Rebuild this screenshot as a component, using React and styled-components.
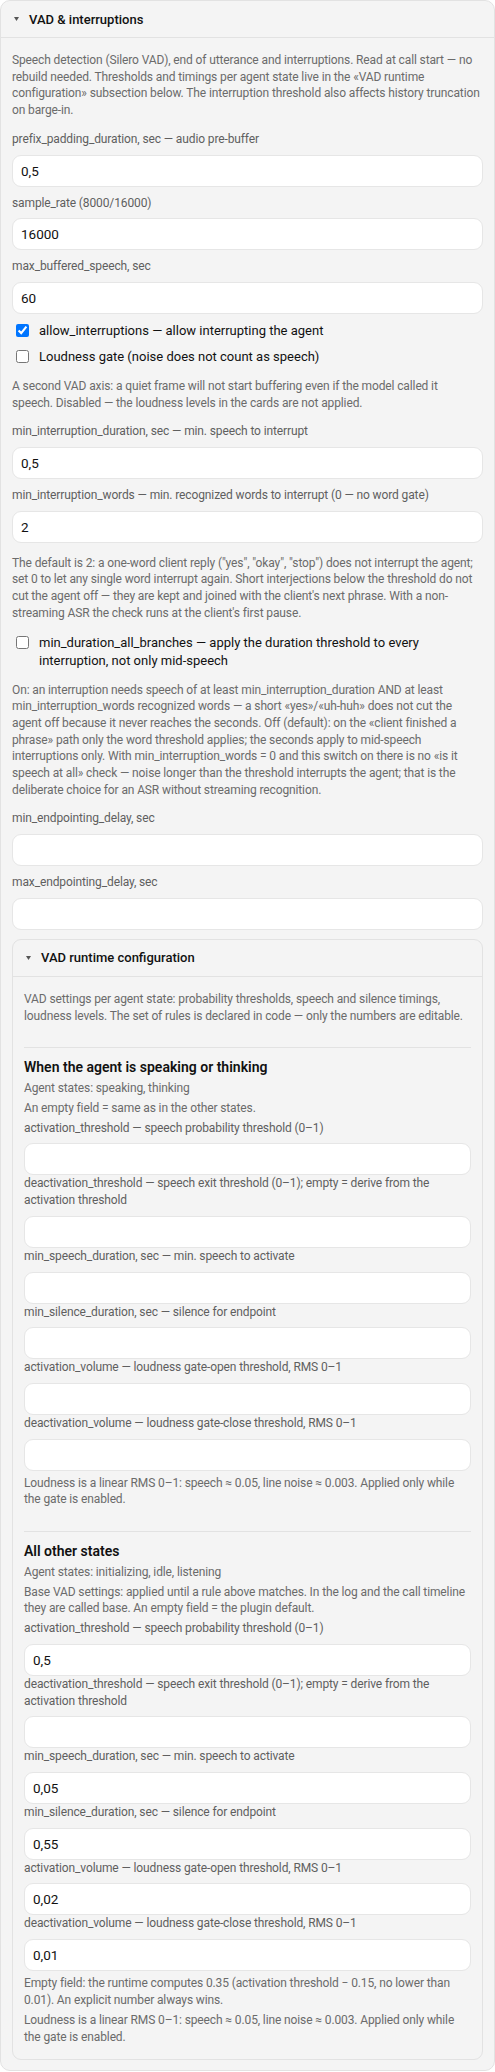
import styled, { createGlobalStyle } from 'styled-components';

const FONT = `"Roboto", "Noto Sans", "Liberation Sans", sans-serif`;

const GlobalStyle = createGlobalStyle`
  * { box-sizing: border-box; }
  body {
    margin: 0;
    background: #ffffff;
    font-family: ${FONT};
    color: #111;
  }
`;

const Panel = styled.details`
  border: 1px solid #e2e2e2;
  border-radius: ${({ $inner }) => ($inner ? '9px' : '10px')};
  background: #f4f4f4;
  margin-top: ${({ $inner }) => ($inner ? '1px' : '0')};
`;

const Summary = styled.summary`
  list-style: none;
  display: flex;
  align-items: center;
  gap: 10px;
  height: 37px;
  padding-left: 13px;
  border-bottom: 1px solid #e2e2e2;
  font-size: 13px;
  font-weight: 500;
  color: #111;
  cursor: pointer;
  &::-webkit-details-marker { display: none; }
`;

const Caret = () => (
  <svg width="5" height="4" viewBox="0 0 5 4">
    <path d="M0 0 L5 0 L2.5 4 Z" fill="#555" />
  </svg>
);

const Body = styled.div`
  display: flex;
  flex-direction: column;
  gap: ${({ $inner }) => ($inner ? '0' : '8px')};
  padding: ${({ $inner }) => ($inner ? '14px 11px 13px' : '14px 11px 10px')};
`;

const small = `
  font-size: 12px;
  line-height: 16.7px;
  letter-spacing: -0.12px;
`;

const Note = styled.p`
  ${small}
  margin: ${({ $m }) => $m || '4px 0'};
  color: #6b6b6b;
`;

const Field = styled.div`
  display: flex;
  flex-direction: column;
`;

const Label = styled.label`
  ${small}
  color: #5f5f5f;
  margin-bottom: 7px;
`;

const Input = styled.input`
  width: 100%;
  height: 32px;
  border: 1px solid #e6e6e6;
  border-radius: 9px;
  background: #fff;
  padding: 0 8px;
  font-family: ${FONT};
  font-size: 13.5px;
  color: #111;
  outline: none;
`;

const CheckRow = styled.label`
  display: flex;
  align-items: flex-start;
  gap: 10px;
  font-size: 13px;
  line-height: 18px;
  color: #111;
  input {
    flex: none;
    width: 13px;
    height: 13px;
    margin: 2.5px 0 0 4px;
  }
`;

const Rules = styled.section`
  margin-top: 23px;
  padding-top: 9px;
  border-top: 1px solid #e2e2e2;
  display: flex;
  flex-direction: column;
`;

const RuleTitle = styled.h4`
  margin: 0 0 3px;
  font-size: 14px;
  line-height: 20px;
  font-weight: 600;
  color: #111;
`;

const Sub = styled.div`
  ${small}
  color: #6b6b6b;
  margin-bottom: 3px;
`;

const FieldBox = ({ label, value }) => (
  <Field>
    <Label>{label}</Label>
    <Input type="text" defaultValue={value} />
  </Field>
);

const LOUDNESS =
  'Loudness is a linear RMS 0–1: speech ≈ 0.05, line noise ≈ 0.003. Applied only while the gate is enabled.';

const ruleFields = (v) => [
  ['activation_threshold — speech probability threshold (0–1)', v[0]],
  ['deactivation_threshold — speech exit threshold (0–1); empty = derive from the activation threshold', v[1]],
  ['min_speech_duration, sec — min. speech to activate', v[2]],
  ['min_silence_duration, sec — silence for endpoint', v[3]],
  ['activation_volume — loudness gate-open threshold, RMS 0–1', v[4]],
  ['deactivation_volume — loudness gate-close threshold, RMS 0–1', v[5]],
];

const rules = [
  {
    title: 'When the agent is speaking or thinking',
    states: 'Agent states: speaking, thinking',
    hint: 'An empty field = same as in the other states.',
    values: ['', '', '', '', '', ''],
    notes: [LOUDNESS],
  },
  {
    title: 'All other states',
    states: 'Agent states: initializing, idle, listening',
    hint: 'Base VAD settings: applied until a rule above matches. In the log and the call timeline they are called base. An empty field = the plugin default.',
    values: ['0,5', '', '0,05', '0,55', '0,02', '0,01'],
    notes: [
      'Empty field: the runtime computes 0.35 (activation threshold − 0.15, no lower than 0.01). An explicit number always wins.',
      LOUDNESS,
    ],
  },
];

const RuleGroup = ({ rule }) => (
  <Rules>
    <RuleTitle>{rule.title}</RuleTitle>
    <Sub>{rule.states}</Sub>
    <Sub>{rule.hint}</Sub>
    {ruleFields(rule.values).map(([label, value]) => (
      <FieldBox key={label} label={label} value={value} />
    ))}
    {rule.notes.map((n, i) => (
      <Note key={i} $m="4px 0 0">
        {n}
      </Note>
    ))}
  </Rules>
);

export default function App() {
  return (
    <>
      <GlobalStyle />
      <Panel open>
        <Summary>
          <Caret />
          VAD &amp; interruptions
        </Summary>
        <Body>
          <Note $m="0 0 4px">
            Speech detection (Silero VAD), end of utterance and interruptions. Read at call start — no
            rebuild needed. Thresholds and timings per agent state live in the «VAD runtime
            configuration» subsection below. The interruption threshold also affects history truncation
            on barge-in.
          </Note>
          <FieldBox label="prefix_padding_duration, sec — audio pre-buffer" value="0,5" />
          <FieldBox label="sample_rate (8000/16000)" value="16000" />
          <FieldBox label="max_buffered_speech, sec" value="60" />
          <CheckRow>
            <input type="checkbox" defaultChecked />
            allow_interruptions — allow interrupting the agent
          </CheckRow>
          <CheckRow>
            <input type="checkbox" />
            Loudness gate (noise does not count as speech)
          </CheckRow>
          <Note>
            A second VAD axis: a quiet frame will not start buffering even if the model called it
            <br />
            speech. Disabled — the loudness levels in the cards are not applied.
          </Note>
          <FieldBox label="min_interruption_duration, sec — min. speech to interrupt" value="0,5" />
          <FieldBox
            label="min_interruption_words — min. recognized words to interrupt (0 — no word gate)"
            value="2"
          />
          <Note>
            The default is 2: a one-word client reply ("yes", "okay", "stop") does not interrupt the
            agent; set 0 to let any single word interrupt again. Short interjections below the
            threshold do not cut the agent off — they are kept and joined with the client's next
            phrase. With a non-streaming ASR the check runs at the client's first pause.
          </Note>
          <CheckRow>
            <input type="checkbox" />
            min_duration_all_branches — apply the duration threshold to every interruption, not only
            mid-speech
          </CheckRow>
          <Note>
            On: an interruption needs speech of at least min_interruption_duration AND at least
            min_interruption_words recognized words — a short «yes»/«uh-huh» does not cut the agent off
            because it never reaches the seconds. Off (default): on the «client finished a phrase»
            path only the word threshold applies; the seconds apply to mid-speech interruptions only.
            With min_interruption_words = 0 and this switch on there is no «is it speech at all» check
            — noise longer than the threshold interrupts the agent; that is the deliberate choice for
            an ASR without streaming recognition.
          </Note>
          <FieldBox label="min_endpointing_delay, sec" value="" />
          <FieldBox label="max_endpointing_delay, sec" value="" />
          <Panel open $inner>
            <Summary>
              <Caret />
              VAD runtime configuration
            </Summary>
            <Body $inner>
              <Note $m="0">
                VAD settings per agent state: probability thresholds, speech and silence timings,
                loudness levels. The set of rules is declared in code — only the numbers are editable.
              </Note>
              {rules.map((r) => (
                <RuleGroup key={r.title} rule={r} />
              ))}
            </Body>
          </Panel>
        </Body>
      </Panel>
    </>
  );
}
